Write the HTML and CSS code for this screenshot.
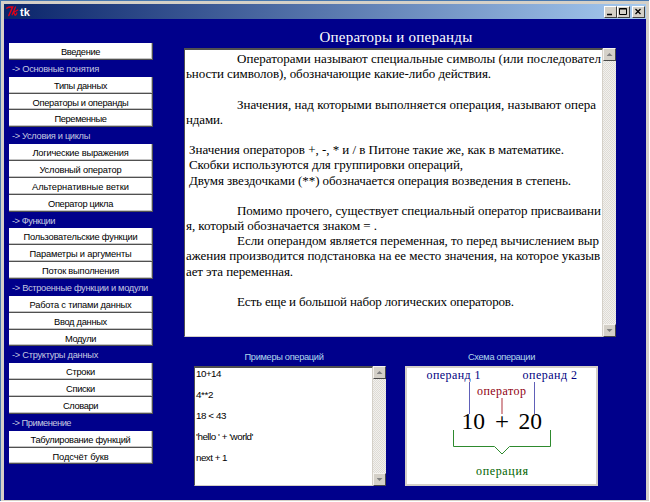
FILE: index.html
```html
<!DOCTYPE html>
<html lang="ru">
<head>
<meta charset="utf-8">
<title>tk</title>
<link rel="stylesheet" href="styles.css">
</head>
<body>
<div class="window">
  <header class="titlebar">
    <svg class="logo" width="13" height="11" viewBox="0 0 13 11" fill="none" stroke="#e00018" stroke-linecap="round">
      <path d="M.8 2.1C2.5 1 4.2 1.2 6.6 1L2.8 9.5" stroke-width="1.5"/>
      <path d="M9.5 1L6.2 8.8M11.8 4L7.7 6.2L9 9.2M10.8 7L9.8 9" stroke-width="1.3"/>
    </svg>
    <span class="caption">tk</span>
    <div class="controls">
      <button class="control"><svg width="12" height="11"><path d="M3 8.5h5" stroke="#000" stroke-width="1.5"/></svg></button>
      <button class="control"><svg width="12" height="11"><path d="M2.5 2.5h7v6h-7zM2.5 3h7" fill="none" stroke="#000"/></svg></button>
      <button class="control close"><svg width="12" height="11"><path d="M3.500 3l5 5M8.500 3l-5 5" stroke="#000" stroke-width="1.3"/></svg></button>
    </div>
  </header>
  <main class="client">
    <nav class="menu">
      <button class="item"><span data-w="39">Введение</span></button>
      <div class="group"><span data-w="87">-&gt; Основные понятия</span></div>
      <button class="item"><span data-w="53">Типы данных</span></button>
      <button class="item"><span data-w="96">Операторы и операнды</span></button>
      <button class="item"><span data-w="52">Переменные</span></button>
      <div class="group"><span data-w="78">-&gt; Условия и циклы</span></div>
      <button class="item"><span data-w="96">Логические выражения</span></button>
      <button class="item"><span data-w="82">Условный оператор</span></button>
      <button class="item"><span data-w="97">Альтернативные ветки</span></button>
      <button class="item"><span data-w="65">Оператор цикла</span></button>
      <div class="group"><span data-w="43">-&gt; Функции</span></div>
      <button class="item"><span data-w="114">Пользовательские функции</span></button>
      <button class="item"><span data-w="102">Параметры и аргументы</span></button>
      <button class="item"><span data-w="77">Поток выполнения</span></button>
      <div class="group"><span data-w="136">-&gt; Встроенные функции и модули</span></div>
      <button class="item"><span data-w="102">Работа с типами данных</span></button>
      <button class="item"><span data-w="53">Ввод данных</span></button>
      <button class="item"><span data-w="31">Модули</span></button>
      <div class="group"><span data-w="86">-&gt; Структуры данных</span></div>
      <button class="item"><span data-w="29">Строки</span></button>
      <button class="item"><span data-w="29">Списки</span></button>
      <button class="item"><span data-w="35">Словари</span></button>
      <div class="group"><span data-w="59">-&gt; Применение</span></div>
      <button class="item"><span data-w="100">Табулирование функций</span></button>
      <button class="item"><span data-w="56">Подсчёт букв</span></button>
    </nav>
    <section class="content">
      <h1 class="title"><span data-w="153">Операторы и операнды</span></h1>
      <div class="textbox article">
        <div class="lines">
          <p class="tab"><span data-w="364">Операторами называют специальные символы (или последовател</span></p>
          <p><span data-w="305">ьности символов), обозначающие какие-либо действия.</span></p>
          <p></p>
          <p class="tab"><span data-w="359">Значения, над которыми выполняется операция, называют опера</span></p>
          <p><span data-w="37">ндами.</span></p>
          <p></p>
          <p class="space"><span data-w="375">Значения операторов +, -, * и / в Питоне такие же, как в математике.</span></p>
          <p class="space"><span data-w="274">Скобки используются для группировки операций,</span></p>
          <p class="space"><span data-w="382">Двумя звездочками (**) обозначается операция возведения в степень.</span></p>
          <p></p>
          <p class="tab"><span data-w="364">Помимо прочего, существует специальный оператор присваивани</span></p>
          <p><span data-w="191">я, который обозначается знаком = .</span></p>
          <p class="tab"><span data-w="362">Если операндом является переменная, то перед вычислением выр</span></p>
          <p><span data-w="414">ажения производится подстановка на ее место значения, на которое указыв</span></p>
          <p><span data-w="107">ает эта переменная.</span></p>
          <p></p>
          <p class="tab"><span data-w="277">Есть еще и большой набор логических операторов.</span></p>
        </div>
        <div class="scrollbar"><i class="arrow up"></i><i class="arrow down"></i></div>
      </div>
      <div class="bottom">
        <section class="panel">
          <h2 class="label"><span data-w="79">Примеры операций</span></h2>
          <div class="textbox examples">
            <div class="lines">
              <p><span data-w="25">10+14</span></p>
              <p><span data-w="17">4**2</span></p>
              <p><span data-w="30">18 &lt; 43</span></p>
              <p><span data-w="57">'hello ' + 'world'</span></p>
              <p><span data-w="31">next + 1</span></p>
            </div>
            <div class="scrollbar"><i class="arrow up"></i><i class="arrow down"></i></div>
          </div>
        </section>
        <section class="panel">
          <h2 class="label"><span data-w="67">Схема операции</span></h2>
          <svg class="scheme" width="193" height="120" viewBox="405 366 193 120">
            <g fill="none">
              <path d="M469.500 382v32M534.500 382v32" stroke="#6060b8"/>
              <path d="M502 398v16" stroke="#c06068" stroke-width="1.300"/>
              <path d="M453.500 430v16.500h41l7.500 7.500l7.500-7.500h41V430" stroke="#2e8a2e"/>
            </g>
            <g class="terms">
              <text class="operand" x="426.500" y="379" textLength="54">операнд 1</text>
              <text class="operand" x="522.500" y="379" textLength="54.500">операнд 2</text>
              <text class="operator" x="477" y="395" textLength="49">оператор</text>
              <text class="operation" x="476" y="475" textLength="52">операция</text>
            </g>
            <g class="numbers">
              <text x="461.500" y="429" textLength="23.500">10</text>
              <text x="495" y="429" textLength="14" lengthAdjust="spacingAndGlyphs">+</text>
              <text x="518.500" y="429" textLength="23.500">20</text>
            </g>
          </svg>
        </section>
      </div>
    </section>
  </main>
</div>
<script src="fit.js"></script>
</body>
</html>
```
FILE: fit.js
```js
// Spread each caption's letters over the width given in data-w.
for (const el of document.querySelectorAll('[data-w]')) {
  const gap = (Number(el.dataset.w) - el.getBoundingClientRect().width) / el.textContent.length;
  el.style.letterSpacing = gap.toFixed(3) + 'px';
}
```
FILE: styles.css
```css
* { box-sizing: border-box; }
body { margin: 0; background: #fff; overflow: hidden; }
p, h1, h2 { margin: 0; font-weight: normal; }
span { white-space: pre; }
button { padding: 0; font: inherit; color: inherit; border-radius: 0; }

.window {
  width: 649px;
  height: 501px;
  background: #d4d0c8;
  border: solid #4878b0;
  border-width: 1px 0 0 1px;
  padding: 3px 3px 1px;
  font-family: "Liberation Sans", Arial, sans-serif;
}
.titlebar {
  height: 15px;
  display: flex;
  align-items: center;
  padding: 0 1px 0 2px;
  background: linear-gradient(90deg, #0a246a, #a6caf0);
}
.caption {
  margin-left: 1px;
  color: #fff;
  font-size: 11px;
  font-weight: bold;
  line-height: 14px;
}
.controls { display: flex; margin-left: auto; }
.control {
  width: 13px;
  height: 12px;
  display: flex;
  background: #d4d0c8;
  border: 1px solid;
  border-color: #fff #404040 #404040 #fff;
}
.control svg { flex: none; margin: -1px; }
.close { margin-left: 2px; }

.client {
  height: 481px;
  display: flex;
  background: #00008b;
}
.menu {
  width: 144px;
  margin: 24px 0 0 5px;
  display: grid;
  grid-template-rows: repeat(25, 16.86px);
  align-content: start;
  font-size: 9.3px;
  line-height: 15px;
}
.item {
  display: block;
  text-align: center;
  background: #fff;
  color: #000;
  border: solid;
  border-width: 0 1px 1px 0;
  border-color: #505050;
  box-shadow: inset -1px -1px #c4c4c4;
  padding-top: 2px;
  line-height: 15px;
}
.group { padding: 2px 0 0 3px; color: #c4c8e0; }

.content { margin-left: 31px; }
.title {
  width: 424px;
  height: 29px;
  padding-top: 9px;
  text-align: center;
  color: #fff;
  font: 15px/18px "Liberation Serif", "Times New Roman", serif;
}
.textbox {
  display: flex;
  background: #fff;
  color: #000;
}
.lines {
  flex: 1;
  border: 1px solid;
  border-color: #505050 #d4d0c8 #d4d0c8 #505050;
  border-top-width: 2px;
}
.article { width: 432px; height: 289px; }
.article .lines {
  padding: 1px 0 0 1px;
  font: 13px/15.2px "Liberation Serif", "Times New Roman", serif;
}
.article p { height: 15.2px; }
.tab { padding-left: 51px; }
.space { padding-left: 3px; }
.scrollbar {
  width: 13px;
  display: flex;
  flex-direction: column;
  justify-content: space-between;
  background: repeating-conic-gradient(#dedbd5 0 25%, #f2f1ee 0 50%) 0 0 / 2px 2px;
}
.arrow {
  height: 13px;
  display: grid;
  place-items: center;
  background: #d4d0c8;
  border: 1px solid;
  border-color: #f4f2ee #484848 #484848 #f4f2ee;
}
.arrow::before {
  content: "";
  width: 6px;
  height: 3px;
  background: #808080;
}
.up::before { clip-path: polygon(50% 0, 100% 100%, 0 100%); }
.down::before { clip-path: polygon(0 0, 100% 0, 50% 100%); }

.bottom { display: flex; gap: 19px; margin: 14px 0 0 10px; }
.label {
  height: 15px;
  padding-top: 1px;
  text-align: center;
  color: #b0d8ec;
  font-size: 9.3px;
  line-height: 11px;
}
.panel:first-child .label { padding-right: 12px; }
.examples { width: 192px; height: 120px; }
.examples .lines { padding-left: 1px; font-size: 9.8px; line-height: 20.9px; }
.examples .lines p:first-child { margin-top: -4px; }
.scheme { display: block; background: #fff; outline: 2px solid #d4d0c8; outline-offset: -2px; }
.terms, .numbers { font-family: "Liberation Serif", "Times New Roman", serif; }
.terms { font-size: 12px; }
.numbers { font-size: 23.5px; }
.operand { fill: #000080; }
.operator { fill: #900010; }
.operation { fill: #006400; }
```
